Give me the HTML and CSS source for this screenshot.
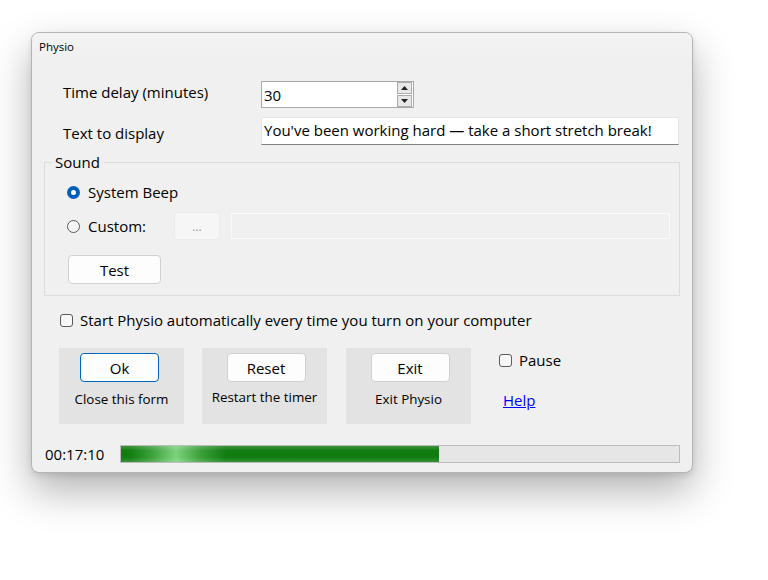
FILE: index.html
```html
<!DOCTYPE html>
<html>
<head>
<meta charset="utf-8">
<link rel="stylesheet" href="styles.css">
</head>
<body>
<div class="window">
  <div class="titlebar">Physio</div>
  <div class="content">
    <div class="row row-delay">
      <span class="label">Time delay (minutes)</span>
      <div class="spin">
        <span class="spin-value">30</span>
        <div class="spin-btns">
          <span class="spin-btn"><svg width="7" height="4" viewBox="0 0 7 4"><path d="M0 4 L3.5 0 L7 4 Z" fill="#222"/></svg></span>
          <span class="spin-btn"><svg width="7" height="4" viewBox="0 0 7 4"><path d="M0 0 L3.5 4 L7 0 Z" fill="#222"/></svg></span>
        </div>
      </div>
    </div>
    <div class="row row-text">
      <span class="label">Text to display</span>
      <div class="textbox">You've been working hard — take a short stretch break!</div>
    </div>
    <fieldset class="sound">
      <legend>Sound</legend>
      <div class="radio-row first">
        <span class="radio checked"></span><span>System Beep</span>
      </div>
      <div class="radio-row custom">
        <span class="radio"></span><span class="custom-label">Custom:</span>
        <span class="dots-btn">...</span>
        <span class="path-box"></span>
      </div>
      <div class="test-row"><span class="btn test">Test</span></div>
    </fieldset>
    <div class="auto-row">
      <span class="check"></span><span>Start Physio automatically every time you turn on your computer</span>
    </div>
    <div class="actions">
      <div class="panel p1"><span class="btn primary">Ok</span><span class="panel-label">Close this form</span></div>
      <div class="panel p2"><span class="btn">Reset</span><span class="panel-label up">Restart the timer</span></div>
      <div class="panel p3"><span class="btn">Exit</span><span class="panel-label">Exit Physio</span></div>
      <div class="side">
        <div class="pause"><span class="check"></span><span>Pause</span></div>
        <a class="help" href="#">Help</a>
      </div>
    </div>
    <div class="status">
      <span class="time">00:17:10</span>
      <div class="bar"><div class="fill" style="width:57%"></div></div>
    </div>
  </div>
</div>
</body>
</html>
```

FILE: styles.css
```css
html, body {
  margin: 0;
  padding: 0;
  background: #ffffff;
}
body {
  font-family: "Open Sans", "Noto Sans", "DejaVu Sans", sans-serif;
  font-size: 15px;
  color: #000;
  width: 768px;
  height: 580px;
  overflow: hidden;
}
.window {
  margin-left: 31px;
  margin-top: 32px;
  width: 660px;
  height: 439px;
  border: 1px solid #b4b4b4;
  border-radius: 8px;
  background: #f0f0f0;
  box-shadow: 0 18px 40px rgba(0, 0, 0, 0.3), 0 3px 6px rgba(0, 0, 0, 0.1);
  display: flex;
  flex-direction: column;
  overflow: hidden;
}
.titlebar {
  height: 29px;
  line-height: 28px;
  padding-left: 7px;
  font-size: 11.5px;
  background: linear-gradient(#f3f3f3, #f0f0f0);
}
.content {
  display: flex;
  flex-direction: column;
}
.row {
  display: flex;
  align-items: center;
  padding-left: 31px;
}
.label {
  width: 198px;
  line-height: 18px;
}
.row-delay { margin-top: 19px; }
.row-delay .label { position: relative; top: -3px; }
.row-text { margin-top: 9px; }
.row-text .label { position: relative; top: 2px; }
.spin {
  width: 151px;
  height: 25px;
  border: 1px solid #a8a8a8;
  background: #fff;
  display: flex;
  align-items: center;
  justify-content: space-between;
}
.spin-value {
  padding-left: 2px;
  font-size: 15px;
}
.spin-btns {
  display: flex;
  flex-direction: column;
  gap: 1px;
  margin-right: 1px;
}
.spin-btn {
  width: 13px;
  height: 10px;
  border: 1px solid #adadad;
  background: #e8e8e8;
  display: flex;
  align-items: center;
  justify-content: center;
}
.textbox {
  width: 414px;
  height: 26px;
  line-height: 25px;
  padding-left: 2px;
  background: #fff;
  border: 1px solid #e6e6e6;
  border-bottom-color: #808080;
  font-size: 15px;
  white-space: nowrap;
}
.sound {
  margin: 8px 0 0 12px;
  width: 636px;
  height: 143px;
  box-sizing: border-box;
  padding: 0;
  border: 1px solid #dcdcdc;
  border-radius: 0;
}
.sound legend {
  margin-left: 7px;
  padding: 0 3px;
  font-size: 15px;
  line-height: 18px;
}
.radio-row {
  display: flex;
  align-items: center;
  padding-left: 22px;
  font-size: 15px;
}
.radio-row.first { margin-top: 11px; }
.radio-row.custom { margin-top: 10px; }
.radio {
  width: 11px;
  height: 11px;
  border: 1px solid #5a5a5a;
  border-radius: 50%;
  background: #f7f7f7;
  margin-right: 8px;
  box-sizing: content-box;
}
.radio.checked {
  width: 5px;
  height: 5px;
  border: 4px solid #005fb8;
  background: #fff;
}
.custom-label { width: 87px; }
.dots-btn {
  width: 44px;
  height: 26px;
  border: 1px solid #ececec;
  border-radius: 4px;
  background: #f6f6f6;
  color: #9a9a9a;
  font-size: 12px;
  display: flex;
  align-items: center;
  justify-content: center;
  margin-left: -1px;
}
.path-box {
  margin-left: 11px;
  width: 437px;
  height: 24px;
  border: 1px solid #fafafa;
  background: #f0f0f0;
}
.test-row {
  padding-left: 23px;
  margin-top: 15px;
}
.btn {
  display: flex;
  align-items: center;
  justify-content: center;
  height: 27px;
  background: #fdfdfd;
  border: 1px solid #d0d0d0;
  border-radius: 4px;
  font-size: 15px;
}
.btn.test { width: 91px; }
.auto-row {
  display: flex;
  align-items: center;
  padding-left: 28px;
  margin-top: 14px;
  font-size: 15px;
}
.check {
  width: 11px;
  height: 11px;
  border: 1px solid #5a5a5a;
  border-radius: 3px;
  background: #f7f7f7;
  margin-right: 7px;
}
.actions {
  display: flex;
  margin-top: 18px;
  padding-left: 27px;
}
.panel {
  width: 125px;
  height: 76px;
  background: #e3e3e3;
  display: flex;
  flex-direction: column;
  align-items: center;
  padding-top: 5px;
  box-sizing: border-box;
}
.p1 { margin-right: 18px; padding-right: 4px; }
.p2 { margin-right: 19px; padding-left: 3px; }
.p3 { margin-right: 18px; padding-left: 3px; }
.panel .btn { width: 77px; }
.panel .btn.primary {
  border-color: #0067c0;
}
.panel-label {
  margin-top: 8px;
  font-size: 13.4px;
}
.p1 .panel-label { margin-left: 4px; }
.p2 .panel-label, .p3 .panel-label { margin-left: -3px; }
.panel-label.up { margin-top: 6px; }
.side {
  display: flex;
  flex-direction: column;
  padding-left: 10px;
  padding-top: 2px;
  font-size: 15px;
}
.pause {
  display: flex;
  align-items: center;
}
.help {
  margin-top: 20px;
  margin-left: 4px;
  color: #0000ff;
  text-decoration: underline;
}
.status {
  display: flex;
  align-items: center;
  margin-top: 20px;
  padding-left: 13px;
}
.time {
  width: 75px;
  font-size: 15px;
}
.bar {
  width: 558px;
  height: 16px;
  border: 1px solid #bcbcbc;
  background: #e6e6e6;
  display: flex;
}
.fill {
  height: 100%;
  background:
    linear-gradient(rgba(255,255,255,0.18), rgba(255,255,255,0) 30%, rgba(255,255,255,0) 70%, rgba(255,255,255,0.15)),
    linear-gradient(90deg, #107c10 0px, #137f13 10px, #3a9f3a 30px, #7dd27d 55px, #3a9f3a 80px, #117d11 105px, #107c10 100%);
}
```
